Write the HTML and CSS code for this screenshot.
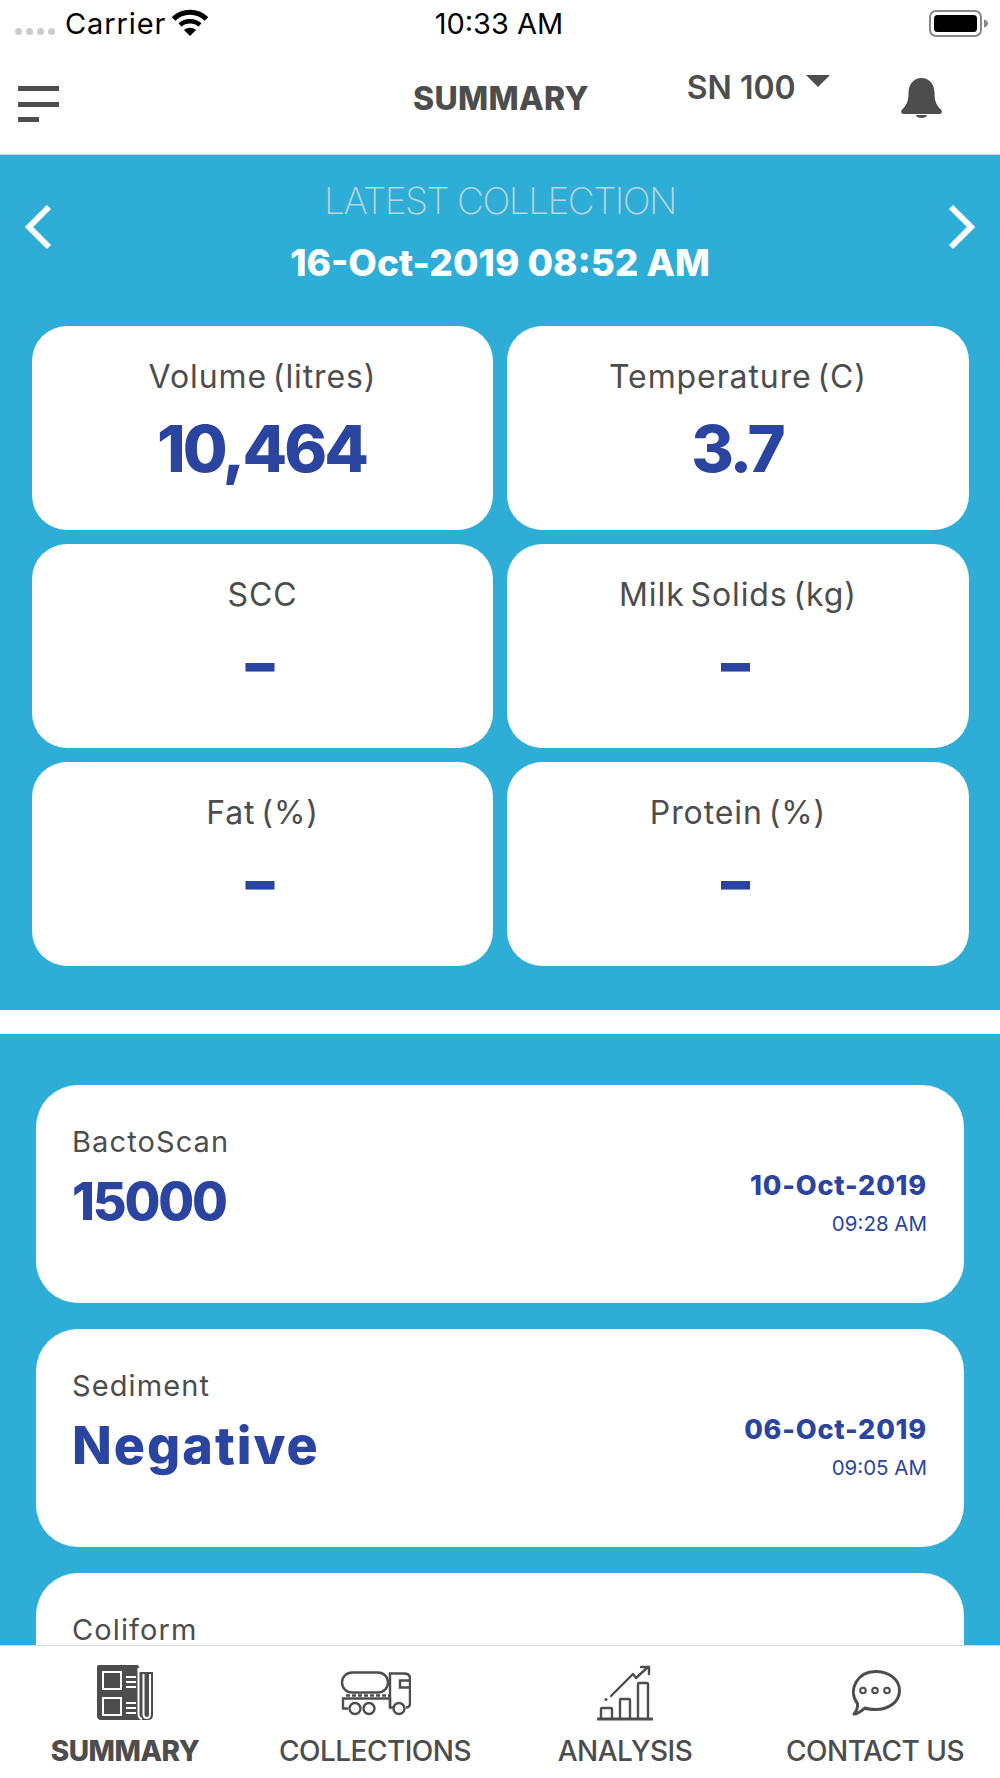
FILE: index.html
```html
<!DOCTYPE html>
<html lang="en">

<head>
  <meta charset="UTF-8">
  <meta name="viewport" content="width=device-width, initial-scale=1.0">
  <title>Summary</title>
  <link rel="stylesheet" href="styles.css">
</head>

<body>
  <div class="status">
    <div class="status-left">
      <span class="dots"><i></i><i></i><i></i><i></i></span>
      <span class="carrier">Carrier</span>
      <svg class="wifi" width="36" height="27" viewBox="0 0 36 27">
        <path d="M1.500 10C10.500 1 25.500 1 34.500 10" fill="none" stroke="#000" stroke-width="5"/>
        <path d="M8 16C13.500 11 22.500 11 28 16" fill="none" stroke="#000" stroke-width="4.500"/>
        <path d="M12 21L18 27L24 21C20.500 18 15.500 18 12 21Z"/>
      </svg>
    </div>
    <span class="clock">10:33 AM</span>
    <svg class="battery" width="59" height="27" viewBox="0 0 59 27">
      <rect x="1" y="1" width="51" height="25" rx="6" fill="none" stroke="#888" stroke-width="2"/>
      <rect x="5" y="5" width="43" height="17" rx="3.500"/>
      <path d="M55 9.500C57 10 59 11.500 59 13.500C59 15.500 57 17 55 17.500Z" fill="#888"/>
    </svg>
  </div>

  <header class="topbar">
    <div class="menu"><i></i><i></i><i class="short"></i></div>
    <h1 class="page-title">SUMMARY</h1>
    <div class="serial">SN 100<span class="caret"></span></div>
    <svg class="bell" width="41" height="40" viewBox="0 0 41 40">
      <path d="M20.500 0C29 0 33.500 7 33.500 15C33.500 24 36 28 40 31.500C41.500 33 41 36 38.500 36H2.500C0 36 -0.500 33 1 31.500C5 28 7.500 24 7.500 15C7.500 7 12 0 20.500 0Z" fill="#4d4d4d"/>
      <path d="M15 37H26C26 39 23.500 40 20.500 40C17.500 40 15 39 15 37Z" fill="#4d4d4d"/>
    </svg>
  </header>

  <main class="content">
    <section class="latest">
      <div class="latest-head">
        <svg class="arrow" width="30" height="48" viewBox="0 0 30 48">
          <path d="M26 4L6 24L26 44" fill="none" stroke="#fff" stroke-width="6"/>
        </svg>
        <div class="latest-title">
          <p class="latest-label">LATEST COLLECTION</p>
          <p class="latest-date">16-Oct-2019 08:52 AM</p>
        </div>
        <svg class="arrow" width="30" height="48" viewBox="0 0 30 48">
          <path d="M4 4L24 24L4 44" fill="none" stroke="#fff" stroke-width="6"/>
        </svg>
      </div>
      <div class="stats">
        <div class="stat"><p class="stat-label">Volume (litres)</p><p class="stat-value">10,464</p></div>
        <div class="stat"><p class="stat-label">Temperature (C)</p><p class="stat-value">3.7</p></div>
        <div class="stat"><p class="stat-label">SCC</p><p class="stat-value dash">–</p></div>
        <div class="stat"><p class="stat-label">Milk Solids (kg)</p><p class="stat-value dash">–</p></div>
        <div class="stat"><p class="stat-label">Fat (%)</p><p class="stat-value dash">–</p></div>
        <div class="stat"><p class="stat-label">Protein (%)</p><p class="stat-value dash">–</p></div>
      </div>
    </section>

    <section class="tests">
      <div class="test">
        <div>
          <p class="test-label">BactoScan</p>
          <p class="test-value num">15000</p>
        </div>
        <div class="test-when">
          <p class="test-date">10-Oct-2019</p>
          <p class="test-time">09:28 AM</p>
        </div>
      </div>
      <div class="test">
        <div>
          <p class="test-label">Sediment</p>
          <p class="test-value">Negative</p>
        </div>
        <div class="test-when">
          <p class="test-date">06-Oct-2019</p>
          <p class="test-time">09:05 AM</p>
        </div>
      </div>
      <div class="test">
        <div>
          <p class="test-label">Coliform</p>
        </div>
      </div>
    </section>
  </main>

  <nav class="tabs">
    <a class="tab active">
      <svg class="tab-icon" width="56" height="56" viewBox="0 0 56 56">
        <path d="M2 0H40Q42 0 42 2V7H56V50Q56 55 51 55H4Q0 55 0 51V2Q0 0 2 0Z" fill="#4d4d4d"/>
        <g fill="none" stroke="#fff" stroke-width="2">
          <rect x="6" y="7" width="18" height="17"/>
          <rect x="6" y="33" width="18" height="17"/>
          <path d="M29 12H39M29 17H39M29 22H39M29 38H39M29 43H39M29 48H39"/>
          <path d="M41.500 3V49Q41.500 53 45 54M46.500 9V49Q46.500 53 50 53Q53 53 53 49V9"/>
        </g>
      </svg>
      <span>SUMMARY</span>
    </a>
    <a class="tab">
      <svg class="tab-icon" width="71" height="45" viewBox="0 0 71 45">
        <g fill="none" stroke="#4d4d4d" stroke-width="2.400">
          <rect x="2" y="2" width="46" height="20" rx="10"/>
          <path d="M6 25H50" stroke-dasharray="4 2"/>
          <path d="M8 38H3V28H50V37H65"/>
          <path d="M50 37V3H64Q70 3 70 8V33Q70 37 66 37"/>
          <path d="M70 10H60V17H70"/>
          <circle cx="15" cy="38" r="5.500" fill="#fff"/>
          <circle cx="29" cy="38" r="5.500" fill="#fff"/>
          <circle cx="59" cy="38" r="5.500" fill="#fff"/>
        </g>
      </svg>
      <span>COLLECTIONS</span>
    </a>
    <a class="tab">
      <svg class="tab-icon" width="56" height="56" viewBox="0 0 56 56">
        <g fill="none" stroke="#4d4d4d" stroke-width="2.400" stroke-linecap="round" stroke-linejoin="round">
          <path d="M1 54H55" stroke-width="3"/>
          <path d="M4 54V44Q4 43 5 43H14Q15 43 15 44V54"/>
          <path d="M23 54V35Q23 34 24 34H32Q33 34 33 35V54"/>
          <path d="M41 54V19Q41 18 42 18H50Q51 18 51 19V54"/>
          <path d="M14 31L36 9L39 13L51 2"/>
          <path d="M44 2H52V9"/>
        </g>
        <circle cx="9" cy="34.500" r="1.500" fill="#4d4d4d"/>
      </svg>
      <span>ANALYSIS</span>
    </a>
    <a class="tab">
      <svg class="tab-icon" width="51" height="47" viewBox="0 0 51 47">
        <path d="M7.500 34C-3 20 8 2 25.500 2C39 2 49.500 10 49.500 21C49.500 33 38 40 25.500 40C21 40 17.500 39.500 15 38.500C12 41 8 44.500 4 44.500C6.500 41.500 8 38 7.500 34Z" fill="none" stroke="#4d4d4d" stroke-width="3" stroke-linejoin="round"/>
        <g fill="none" stroke="#4d4d4d" stroke-width="2">
          <circle cx="13" cy="21" r="2.800"/>
          <circle cx="25" cy="21" r="2.800"/>
          <circle cx="37" cy="21" r="2.800"/>
        </g>
      </svg>
      <span>CONTACT US</span>
    </a>
  </nav>
</body>

</html>
```

FILE: styles.css
```css
*{
  box-sizing: border-box;
}
html,body{
  margin:0;
  height:1778px;
}
body{
  display:flex;
  flex-direction:column;
  overflow:hidden;
  background:#fff;
  font-family:"Inter","Liberation Sans",sans-serif;
  color:#4d4d4d;
}
p,h1{
  margin:0;
}

/* status bar */
.status{
  display:flex;
  align-items:center;
  justify-content:space-between;
  height:46px;
  padding:0 12px 0 15px;
  color:#000;
}
.status-left{
  display:flex;
  align-items:center;
  width:244px;
}
.dots{
  display:flex;
  gap:4px;
  margin-top:17px;
}
.dots i{
  width:7px;
  height:7px;
  border-radius:50%;
  background:#ccc;
}
.carrier{
  margin-left:10px;
  font-size:29px;
  letter-spacing:.9px;
}
.wifi{
  margin-left:6px;
  margin-top:-1px;
}
.clock{
  font-size:29px;
}
.battery{
  margin-left:190px;
}

/* top bar */
.topbar{
  display:flex;
  align-items:flex-start;
  height:109px;
  border-bottom:1px solid #c9d3d8;
  padding-left:18px;
}
.menu{
  display:flex;
  flex-direction:column;
  gap:10.500px;
  width:41px;
  margin-top:40px;
}
.menu i{
  height:5px;
  background:#4d4d4d;
}
.menu i.short{
  width:21px;
}
.page-title{
  margin:33px 0 0 354px;
  font-size:32px;
  line-height:40px;
  font-weight:800;
  letter-spacing:.3px;
}
.serial{
  display:flex;
  margin:22px 0 0 98px;
  font-size:32px;
  line-height:40px;
  font-weight:600;
}
.caret{
  width:0;
  height:0;
  margin:7px 0 0 10px;
  border-left:12px solid transparent;
  border-right:12px solid transparent;
  border-top:12px solid #4d4d4d;
}
.bell{
  margin:32px 0 0 71px;
}

/* latest collection */
.content{
  flex:1;
  overflow:hidden;
  background:#2eaed6;
}
.latest{
  padding:0 31px 44px 32px;
  border-bottom:24px solid #fff;
  height:879px;
}
.latest-head{
  display:flex;
  align-items:flex-start;
  justify-content:space-between;
  height:171px;
  margin:0 -8px 0 -9px;
}
.arrow{
  margin-top:48px;
  flex:none;
}
.latest-title{
  text-align:center;
}
.latest-label{
  margin-top:24px;
  font-size:37px;
  line-height:44px;
  font-weight:200;
  letter-spacing:-1.500px;
  color:#b9d5de;
}
.latest-date{
  margin-top:15px;
  font-size:37px;
  line-height:50px;
  font-weight:800;
  color:#fff;
}
.stats{
  display:grid;
  grid-template-columns:461px 462px;
  grid-auto-rows:204px;
  gap:14px;
}
.stat{
  padding-top:29px;
  border-radius:35px;
  background:#fff;
  text-align:center;
}
.stat-label{
  font-size:32px;
  line-height:44px;
  letter-spacing:.9px;
  word-spacing:-4px;
}
.stat-value{
  margin-top:12px;
  padding-right:2px;
  font-size:65px;
  line-height:76px;
  font-weight:800;
  letter-spacing:-3px;
  color:#2a44a0;
}
.stat-value.dash{
  margin-top:8px;
  padding-right:8px;
  font-size:58px;
  font-weight:900;
}

/* lab results */
.tests{
  display:flex;
  flex-direction:column;
  gap:26px;
  padding:51px 36px 0;
}
.test{
  display:flex;
  justify-content:space-between;
  flex:none;
  height:218px;
  padding:41px 37px 0 36px;
  border-radius:42px;
  background:#fff;
}
.test-label{
  font-size:29px;
  line-height:32px;
  letter-spacing:1.100px;
}
.test-value{
  margin-top:12px;
  font-size:52px;
  line-height:64px;
  font-weight:800;
  letter-spacing:2px;
  color:#2a44a0;
}
.test-value.num{
  letter-spacing:-2.200px;
}
.test-when{
  margin-top:40px;
  text-align:right;
  color:#2a44a0;
}
.test-date{
  font-size:27px;
  line-height:40px;
  font-weight:800;
  letter-spacing:.8px;
}
.test-time{
  font-size:20.500px;
  line-height:30px;
  margin-top:3px;
}

/* bottom tabs */
.tabs{
  display:grid;
  grid-template-columns:repeat(4,250px);
  flex:none;
  height:133px;
  border-top:1px solid #d5d9db;
  background:#fff;
}
.tab{
  display:flex;
  flex-direction:column;
  align-items:center;
  font-size:28px;
  font-weight:500;
  letter-spacing:-.5px;
}
.tab-icon{
  height:56px;
  margin-top:19px;
  flex:none;
}
.tab span{
  margin-top:12px;
  line-height:36px;
}
.tab.active span{
  font-weight:800;
}
```
